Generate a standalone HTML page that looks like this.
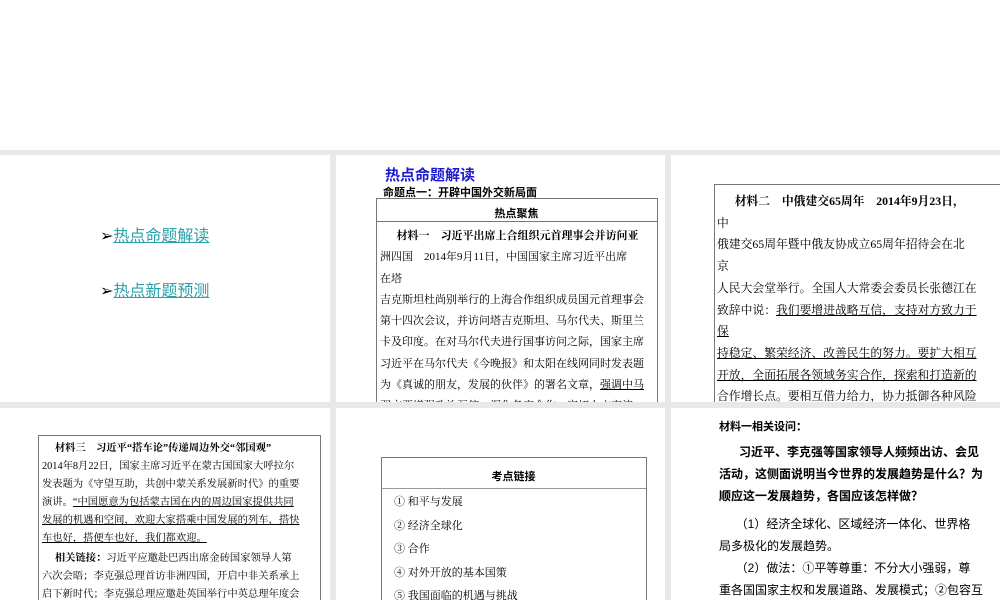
<!DOCTYPE html>
<html><head><meta charset="utf-8"><style>
body{margin:0;width:1000px;height:600px;background:#fff;position:relative;overflow:hidden;font-family:"Liberation Sans","Noto Sans CJK SC",sans-serif;}
.bg{position:absolute;left:0;top:150px;width:1000px;height:450px;background:#e8e8e8;}
.s{position:absolute;background:#fff;overflow:hidden;}
.a{position:absolute;white-space:nowrap;}
.b{font-weight:bold;}
.u{text-decoration:underline;}
.serif{font-family:"Liberation Serif","Noto Serif CJK SC",serif;}
.serif div{white-space:nowrap;}
</style></head><body>
<div class="bg"></div>
<!-- row 1 -->
<div class="s" style="left:0;top:155px;width:330px;height:247px;">
 <div class="a" style="left:100px;top:67px;font-size:16px;color:#000">➢<span class="u" style="color:#2aa0a8">热点命题解读</span></div>
 <div class="a" style="left:100px;top:122px;font-size:16px;color:#000">➢<span class="u" style="color:#2aa0a8">热点新题预测</span></div>
</div>
<div class="s" style="left:336px;top:155px;width:329px;height:247px;">
 <div class="a b" style="left:49px;top:9px;font-size:15px;color:#1a1ad0">热点命题解读</div>
 <div class="a b" style="left:47px;top:29px;font-size:11px">命题点一：开辟中国外交新局面</div>
 <div style="position:absolute;left:40px;top:43px;width:280px;height:230px;border:1px solid #777;border-bottom:none"></div>
 <div class="a b" style="left:40px;top:50px;width:281px;text-align:center;font-size:11px">热点聚焦</div>
 <div style="position:absolute;left:40px;top:66px;width:281px;border-top:1px solid #777"></div>
 <div class="serif" style="position:absolute;left:44px;top:71px;width:276px;font-size:11px;line-height:21.3px">
  <div class="b">&nbsp;&nbsp;&nbsp;&nbsp;&nbsp;&nbsp;材料一　习近平出席上合组织元首理事会并访问亚</div>
  <div>洲四国　2014年9月11日，中国国家主席习近平出席</div>
  <div>在塔</div>
  <div>吉克斯坦杜尚别举行的上海合作组织成员国元首理事会</div>
  <div>第十四次会议，并访问塔吉克斯坦、马尔代夫、斯里兰</div>
  <div>卡及印度。在对马尔代夫进行国事访问之际，国家主席</div>
  <div>习近平在马尔代夫《今晚报》和太阳在线网同时发表题</div>
  <div>为《真诚的朋友，发展的伙伴》的署名文章，<span class="u">强调中马</span></div>
  <div>双方要增强政治互信，深化务实合作，密切人文交流</div>
 </div>
</div>
<div class="s" style="left:671px;top:155px;width:329px;height:247px;">
 <div style="position:absolute;left:43px;top:29px;width:300px;height:230px;border:1px solid #777;border-right:none"></div>
 <div class="serif" style="position:absolute;left:46px;top:36px;width:290px;font-size:11.8px;line-height:21.7px">
  <div class="b">&nbsp;&nbsp;&nbsp;&nbsp;&nbsp;&nbsp;材料二　中俄建交65周年　2014年9月23日，</div>
  <div>中</div>
  <div>俄建交65周年暨中俄友协成立65周年招待会在北</div>
  <div>京</div>
  <div>人民大会堂举行。全国人大常委会委员长张德江在</div>
  <div>致辞中说：<span class="u">我们要增进战略互信，支持对方致力于</span></div>
  <div class="u">保</div>
  <div class="u">持稳定、繁荣经济、改善民生的努力。要扩大相互</div>
  <div class="u">开放，全面拓展各领域务实合作，探索和打造新的</div>
  <div>合作增长点。要相互借力给力，协力抵御各种风险</div>
 </div>
</div>
<!-- row 2 -->
<div class="s" style="left:0;top:408px;width:330px;height:192px;">
 <div style="position:absolute;left:38px;top:27px;width:281px;height:200px;border:1px solid #777"></div>
 <div class="serif" style="position:absolute;left:42px;top:32px;width:278px;font-size:10.3px;line-height:18px">
  <div class="b">&nbsp;&nbsp;&nbsp;&nbsp;&nbsp;材料三　习近平“搭车论”传递周边外交“邻国观”</div>
  <div>2014年8月22日，国家主席习近平在蒙古国国家大呼拉尔</div>
  <div>发表题为《守望互助，共创中蒙关系发展新时代》的重要</div>
  <div>演讲。<span class="u">“中国愿意为包括蒙古国在内的周边国家提供共同</span></div>
  <div class="u">发展的机遇和空间，欢迎大家搭乘中国发展的列车，搭快</div>
  <div class="u">车也好，搭便车也好，我们都欢迎。</div>
  <div style="margin-top:2px">&nbsp;&nbsp;&nbsp;&nbsp;&nbsp;<b>相关链接：</b>习近平应邀赴巴西出席金砖国家领导人第</div>
  <div>六次会晤；李克强总理首访非洲四国，开启中非关系承上</div>
  <div>启下新时代；李克强总理应邀赴英国举行中英总理年度会</div>
 </div>
</div>
<div class="s" style="left:336px;top:408px;width:329px;height:192px;">
 <div style="position:absolute;left:45px;top:49px;width:264px;height:200px;border:1px solid #777"></div>
 <div class="a b" style="left:45px;top:60px;width:265px;text-align:center;font-size:11px">考点链接</div>
 <div style="position:absolute;left:45px;top:80px;width:265px;border-top:1px solid #999"></div>
 <div class="serif" style="position:absolute;left:58px;top:83px;font-size:11px;line-height:23.5px">
  <div>① 和平与发展</div><div>② 经济全球化</div><div>③ 合作</div><div>④ 对外开放的基本国策</div><div>⑤ 我国面临的机遇与挑战</div>
 </div>
</div>
<div class="s" style="left:671px;top:408px;width:329px;height:192px;">
 <div style="position:absolute;left:48px;top:8px;width:280px;font-size:12px;line-height:22px;white-space:nowrap">
  <div class="b" style="font-size:11px">材料一相关设问：</div>
  <div class="b" style="margin-top:3px">&nbsp;&nbsp;&nbsp;&nbsp;&nbsp;&nbsp;习近平、李克强等国家领导人频频出访、会见</div>
  <div class="b">活动，这侧面说明当今世界的发展趋势是什么？为</div>
  <div class="b">顺应这一发展趋势，各国应该怎样做？</div>
  <div style="margin-top:6px">&nbsp;&nbsp;&nbsp;&nbsp;&nbsp;（1）经济全球化、区域经济一体化、世界格</div>
  <div>局多极化的发展趋势。</div>
  <div>&nbsp;&nbsp;&nbsp;&nbsp;&nbsp;（2）做法：①平等尊重：不分大小强弱，尊</div>
  <div>重各国国家主权和发展道路、发展模式；②包容互</div>
  <div>鉴：尊重文明多样性，在交流借鉴、取长补短中相</div>
 </div>
</div>
</body></html>
